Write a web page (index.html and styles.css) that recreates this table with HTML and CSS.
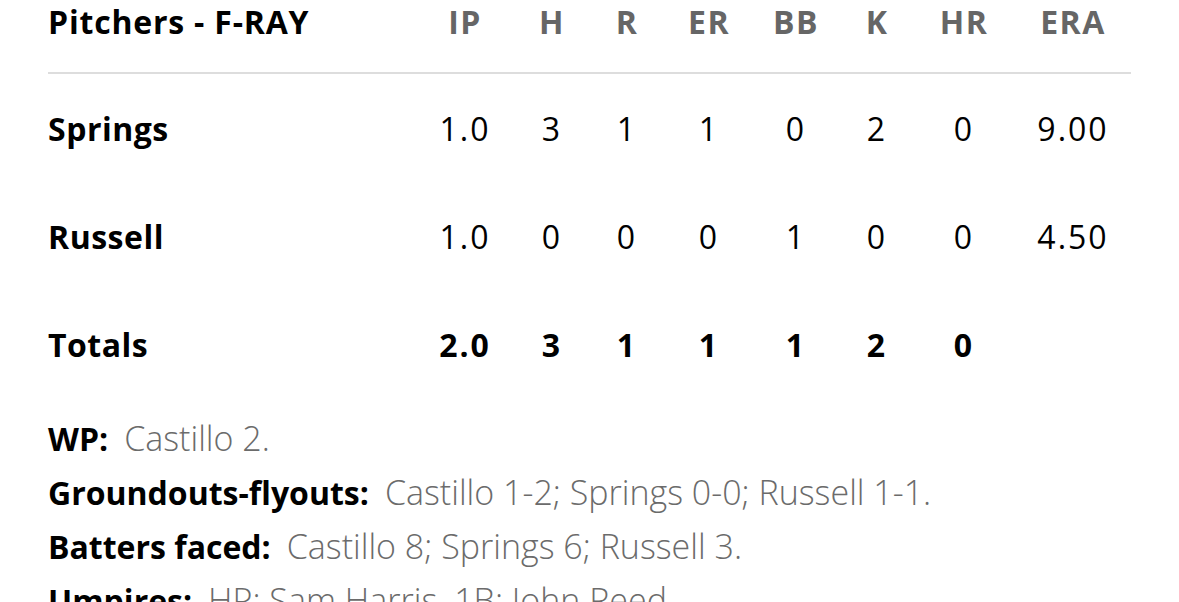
FILE: index.html
```html
<!DOCTYPE html>
<html lang="en">
<head>
<meta charset="utf-8">
<title>Pitchers - F-RAY</title>
<link rel="stylesheet" href="styles.css">
</head>
<body>
<div class="wrap">
  <div class="grid head">
    <div class="name">Pitchers - F-RAY</div>
    <div class="c">IP</div><div class="c">H</div><div class="c">R</div><div class="c">ER</div>
    <div class="c">BB</div><div class="c">K</div><div class="c">HR</div><div class="c">ERA</div>
  </div>
  <div class="rule"></div>
  <div class="grid row">
    <div class="name">Springs</div>
    <div class="c">1.0</div><div class="c">3</div><div class="c">1</div><div class="c">1</div>
    <div class="c">0</div><div class="c">2</div><div class="c">0</div><div class="c">9.00</div>
  </div>
  <div class="grid row">
    <div class="name">Russell</div>
    <div class="c">1.0</div><div class="c">0</div><div class="c">0</div><div class="c">0</div>
    <div class="c">1</div><div class="c">0</div><div class="c">0</div><div class="c">4.50</div>
  </div>
  <div class="grid row total">
    <div class="name">Totals</div>
    <div class="c">2.0</div><div class="c">3</div><div class="c">1</div><div class="c">1</div>
    <div class="c">1</div><div class="c">2</div><div class="c">0</div><div class="c"></div>
  </div>
  <div class="notes">
    <div class="note"><span class="lbl">WP:</span><span class="val">Castillo 2.</span></div>
    <div class="note"><span class="lbl">Groundouts-flyouts:</span><span class="val">Castillo 1-2; Springs 0-0; Russell 1-1.</span></div>
    <div class="note"><span class="lbl">Batters faced:</span><span class="val">Castillo 8; Springs 6; Russell 3.</span></div>
    <div class="note"><span class="lbl">Umpires:</span><span class="val">HP: Sam Harris. 1B: John Reed.</span></div>
  </div>
</div>
</body>
</html>
```
FILE: styles.css
```css
html, body {
  margin: 0;
  padding: 0;
  background: #fff;
}
body {
  font-family: "Open Sans", "Liberation Sans", sans-serif;
  font-size: 32px;
  color: #000;
  overflow: hidden;
}
.wrap {
  padding-left: 48px;
}
.grid {
  display: grid;
  grid-template-columns: 372px 88px 86px 64px 100px 74px 88px 86px 132px;
  align-items: center;
  white-space: nowrap;
}
.c {
  text-align: center;
  letter-spacing: 2px;
  padding-left: 2px;
}
.name {
  font-weight: 700;
}
.head .name {
  letter-spacing: 0.8px;
}
.head {
  height: 34px;
}
.head .c {
  color: #666;
  font-weight: 700;
  letter-spacing: 1.5px;
}
.rule {
  margin-top: 38px;
  width: 1083px;
  height: 2px;
  background: #dddddd;
}
.row {
  height: 108px;
}
.row .name {
  letter-spacing: 0.5px;
}
.total .c {
  font-weight: 700;
}
.notes {
  padding-top: 13px;
}
.note {
  height: 54px;
  display: flex;
  align-items: center;
  white-space: nowrap;
}
.lbl {
  font-weight: 700;
  margin-right: 16px;
}
.val {
  color: #6b6b6b;
  font-weight: 300;
  font-size: 34px;
}
```
